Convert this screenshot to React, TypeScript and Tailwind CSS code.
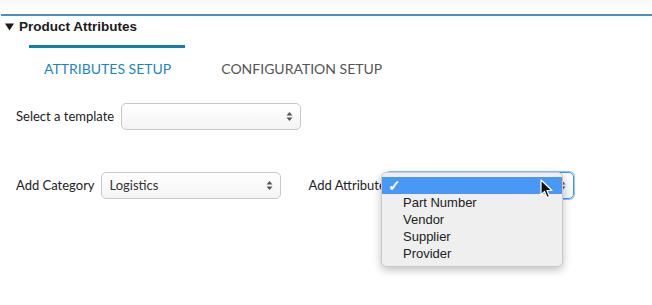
function Stepper() {
  return (
    <svg width="7" height="11" viewBox="0 0 7 11" className="shrink-0">
      <path d="M3.5 1 L6.5 4.5 L0.5 4.5 Z" fill="#555" />
      <path d="M3.5 10 L6.5 6.5 L0.5 6.5 Z" fill="#555" />
    </svg>
  );
}

function SelectBox({ value, width, focused }: { value?: string; width: string; focused?: boolean }) {
  return (
    <div
      className={`flex items-center justify-between h-[27px] ${width} rounded-[5px] border pl-2 pr-[7px] text-[13px] text-[#333] bg-gradient-to-b from-white to-[#f4f4f4] ${
        focused ? "border-[#3b99fc] shadow-[0_0_0_1px_#8fc3f7]" : "border-[#c8c8c8]"
      }`}
    >
      <span>{value}</span>
      <Stepper />
    </div>
  );
}

const options = ["Part Number", "Vendor", "Supplier", "Provider"];

export default function App() {
  return (
    <div className="relative w-[652px] h-[305px] bg-white overflow-hidden font-['Lato',sans-serif] text-[#222]">
      {/* faint strip above the rule */}
      <div className="h-[14px] bg-gradient-to-b from-[#f8f8f8] to-white" />
      <div className="ml-[1px] h-[2px] bg-[#4e8fbf]" />

      {/* section header */}
      <div className="flex items-center gap-[5px] pl-[5px] mt-[2px] h-[18px] font-['Liberation_Sans',Arial,sans-serif] font-bold text-[#1b1b1b]">
        <svg width="9" height="8" viewBox="0 0 9 8" className="shrink-0">
          <path d="M0 0.5 L9 0.5 L4.5 7.5 Z" fill="#1b1b1b" />
        </svg>
        <span className="text-[13.5px]">Product Attributes</span>
      </div>

      {/* tabs */}
      <div className="ml-[29px] mt-[9px] w-[156px] h-[3px] bg-[#0f7fb1]" />
      <div className="flex items-center mt-[10px] h-[20px] text-[14px]">
        <span className="ml-[44px] text-[#1a87bf]">ATTRIBUTES SETUP</span>
        <span className="ml-[50px] text-[#555]">CONFIGURATION SETUP</span>
      </div>

      {/* template row */}
      <div className="flex items-center gap-[7px] pl-[16px] mt-[25px] text-[13px]">
        <span>Select a template</span>
        <SelectBox width="w-[180px]" />
      </div>

      {/* category / attribute row */}
      <div className="flex items-center pl-[16px] mt-[42px] text-[13px]">
        <span>Add Category</span>
        <div className="ml-[6px]">
          <SelectBox value="Logistics" width="w-[180px]" />
        </div>
        <span className="ml-[28px]">Add Attribute</span>
        <div className="ml-[-1px]">
          <SelectBox width="w-[189px]" focused />
        </div>
      </div>

      {/* open dropdown menu */}
      <div className="absolute left-[381px] top-[172px] w-[182px] rounded-[5px] border border-[#c9c9c9] bg-[#efefef] py-[4px] shadow-[0_3px_8px_rgba(0,0,0,0.25)] font-['Liberation_Sans',Arial,sans-serif] text-[13px] text-[#222]">
        <div className="flex items-center h-[17px] bg-[#4a98f6] text-white pl-[6px]">
          <span className="text-[15px] font-bold leading-none">✓</span>
        </div>
        {options.map((o) => (
          <div key={o} className="h-[17px] leading-[17px] pl-[21px]">
            {o}
          </div>
        ))}
      </div>

      {/* mouse pointer */}
      <svg className="absolute left-[540px] top-[179px]" width="14" height="20" viewBox="0 0 14 20">
        <path d="M1 1 L1 16 L4.5 12.5 L7 18.5 L9.5 17.5 L7 11.5 L12 11.5 Z" fill="#111" stroke="#fff" strokeWidth="1.2" strokeLinejoin="round" />
      </svg>
    </div>
  );
}
